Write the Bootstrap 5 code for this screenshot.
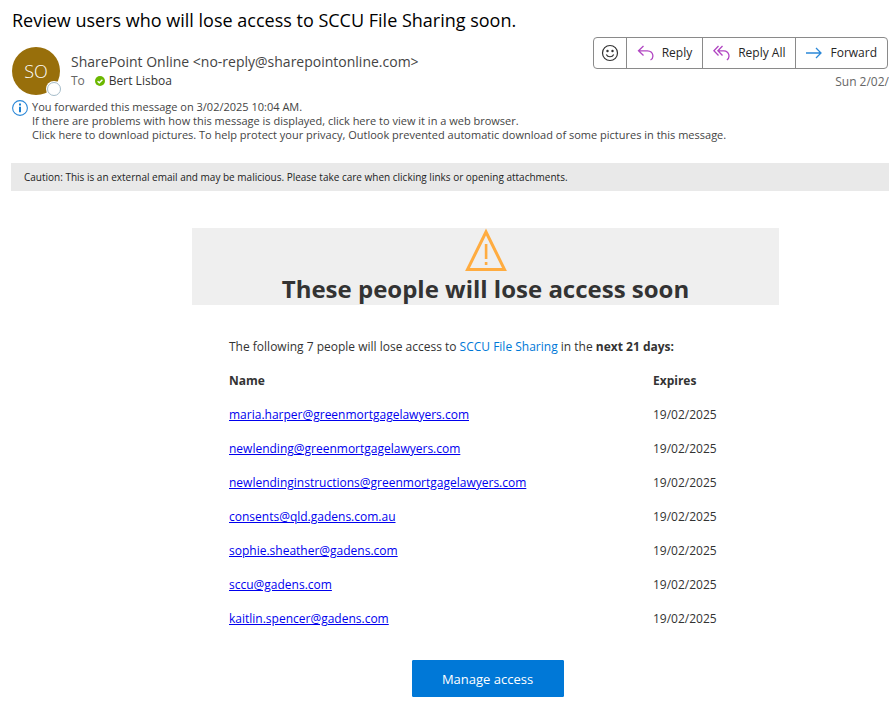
<!DOCTYPE html>
<html lang="en">
<head>
<meta charset="utf-8">
<meta name="viewport" content="width=device-width, initial-scale=1">
<title>Review users who will lose access to SCCU File Sharing soon.</title>
<link href="https://cdn.jsdelivr.net/npm/bootstrap@5.3.0/dist/css/bootstrap.min.css" rel="stylesheet">
<style>
body{font-family:"Open Sans","Noto Sans",sans-serif;font-size:12px;line-height:18px;color:#333;background:#fff;overflow-x:hidden}
.mail-head{padding:8px 0 0 12px}
.subject{font-size:18px;line-height:24px;font-weight:400;color:#000}
.sender{padding:15px 0 5px}
.avatar{width:48px;height:48px;background:#986f0b;color:#fff;font-size:18px;font-weight:300;margin-right:11px}
.presence{position:absolute;right:-1px;bottom:-1px;width:14px;height:14px;border:1px solid #a5bcc9;background:#fff;box-shadow:0 0 0 1px #fff}
.from{font-size:14px;line-height:20px;color:#444}
.sender-text{padding-top:5px}
.soft{color:#666}
.actions-col{padding-top:5px}
.actions{margin-right:1px}
.actions .btn{--bs-btn-border-color:#8a8a8a;--bs-btn-color:#262626;--bs-btn-border-radius:4px;--bs-btn-font-size:12px;--bs-btn-line-height:18px;--bs-btn-padding-y:6px;--bs-btn-padding-x:10px;height:32px}
.actions .react{--bs-btn-padding-x:7px}
.notes{font-size:11px;line-height:14px;color:#444}
.caution{margin:21px 0 0 11px;padding:5px 13px;background:#e9e9e9;color:#222;font-size:10px}
.mail-body{padding:37px 0 20px 82px}
.sheet{max-width:587px}
.banner{background:#efefef;height:77px}
.banner h1{font-size:24px;line-height:34px;font-weight:700;color:#333}
.details{padding:33px 37px 24px}
.site{color:#0078d7}
.people{--bs-table-color:#333;color:#333}
.people>:not(caption)>*>*{padding:8px 0;border:0}
.people a{color:#00e}
.expires{width:89px}
.btn-manage{--bs-btn-color:#fff;--bs-btn-bg:#0078d7;--bs-btn-hover-color:#fff;--bs-btn-hover-bg:#0067b8;--bs-btn-border-color:#0078d7;--bs-btn-border-radius:1px;--bs-btn-font-size:13px;--bs-btn-line-height:18px;width:152px;height:37px}
</style>
<script defer src="https://cdn.jsdelivr.net/npm/bootstrap@5.3.0/dist/js/bootstrap.bundle.min.js"></script>
</head>
<body>
<header class="mail-head">
  <h2 class="subject mb-0">Review users who will lose access to SCCU File Sharing soon.</h2>
  <div class="d-flex justify-content-between">
    <div class="sender d-flex">
      <div class="avatar rounded-circle position-relative d-flex align-items-center justify-content-center flex-shrink-0">SO<span class="presence rounded-circle"></span></div>
      <div class="sender-text">
        <div class="from text-nowrap">SharePoint Online &lt;no-reply@sharepointonline.com&gt;</div>
        <div class="d-flex align-items-center"><span class="soft me-2">To</span>
          <svg class="me-1" width="12" height="10" viewBox="0 0 12 10" aria-hidden="true"><circle cx="7" cy="5" r="5" fill="#6bb700"/><path d="M4.600 5.200 6.300 6.800 9.400 3.700" fill="none" stroke="#fff" stroke-width="1.400"/></svg>
          <span>Bert Lisboa</span></div>
      </div>
    </div>
    <div class="actions-col d-flex flex-column">
      <div class="btn-group actions" role="group" aria-label="Message actions">
        <button type="button" class="btn react d-flex align-items-center" aria-label="React"><svg width="18" height="18" viewBox="0 0 18 18" fill="none" stroke="#333" stroke-width="1.200"><circle cx="9" cy="9" r="7.500"/><path d="M5.300 10.500c1.400 3 6 3 7.400 0"/><circle cx="6.500" cy="7" r=".6" fill="#333"/><circle cx="11.500" cy="7" r=".6" fill="#333"/></svg></button>
        <button type="button" class="btn d-flex align-items-center gap-2"><svg width="17" height="16" viewBox="0 0 17 16" fill="none" stroke="#b146c2" stroke-width="1.300"><path d="M6.500 1 1.500 5.800l5 4.700M1.500 5.800h9c6.500.3 6.500 7.500 3 9.200"/></svg>Reply</button>
        <button type="button" class="btn d-flex align-items-center gap-2"><svg width="17" height="16" viewBox="0 0 17 16" fill="none" stroke="#b146c2" stroke-width="1.300"><path d="M5.500 1 .9 5.800l4.600 4.700M9.500 1 4.900 5.800l4.600 4.700M4.900 5.800h6c5.500.3 6.500 7 3 9.200"/></svg>Reply All</button>
        <button type="button" class="btn d-flex align-items-center gap-2"><svg width="16" height="16" viewBox="0 0 16 16" fill="none" stroke="#2b88d8" stroke-width="1.300"><path d="M0 8h15M10 3l5 5-5 5"/></svg>Forward</button>
      </div>
      <div class="soft text-end text-nowrap pt-1">Sun 2/02/</div>
    </div>
  </div>
  <div class="notes d-flex">
    <svg class="flex-shrink-0 me-1" width="16" height="16" viewBox="0 0 16 16" aria-hidden="true"><circle cx="8" cy="8" r="7.400" fill="#fff" stroke="#2b88d8" stroke-width="1.100"/><path d="M7 3.500h2v2H7zM7 6.700h2v5.500H7z" fill="#1a7fd0"/></svg>
    <div>
      <div>You forwarded this message on 3/02/2025 10:04 AM.</div>
      <div>If there are problems with how this message is displayed, click here to view it in a web browser.</div>
      <div>Click here to download pictures. To help protect your privacy, Outlook prevented automatic download of some pictures in this message.</div>
    </div>
  </div>
</header>
<div class="caution">Caution: This is an external email and may be malicious. Please take care when clicking links or opening attachments.</div>
<main class="mail-body">
  <div class="sheet mx-auto">
    <div class="banner text-center">
      <svg class="d-block mx-auto" width="44" height="44" viewBox="0 0 44 44" aria-hidden="true"><path d="M22 4 3.500 41.500h37z" fill="none" stroke="#ffac40" stroke-width="3"/><path d="M20.800 16h2.600v15h-2.600zM20.800 34h2.600v3h-2.600z" fill="#ffac40"/></svg>
      <h1 class="mb-0 text-nowrap">These people will lose access soon</h1>
    </div>
    <div class="details">
      <p class="mb-2">The following 7 people will lose access to <a href="#" class="site text-decoration-none">SCCU File Sharing</a> in the <strong>next 21 days:</strong></p>
      <table class="table people mb-0">
        <thead><tr><th scope="col">Name</th><th scope="col" class="expires">Expires</th></tr></thead>
        <tbody>
          <tr><td><a href="#">maria.harper@greenmortgagelawyers.com</a></td><td>19/02/2025</td></tr>
          <tr><td><a href="#">newlending@greenmortgagelawyers.com</a></td><td>19/02/2025</td></tr>
          <tr><td><a href="#">newlendinginstructions@greenmortgagelawyers.com</a></td><td>19/02/2025</td></tr>
          <tr><td><a href="#">consents@qld.gadens.com.au</a></td><td>19/02/2025</td></tr>
          <tr><td><a href="#">sophie.sheather@gadens.com</a></td><td>19/02/2025</td></tr>
          <tr><td><a href="#">sccu@gadens.com</a></td><td>19/02/2025</td></tr>
          <tr><td><a href="#">kaitlin.spencer@gadens.com</a></td><td>19/02/2025</td></tr>
        </tbody>
      </table>
    </div>
    <div class="text-center ps-1"><button type="button" class="btn btn-manage">Manage access</button></div>
  </div>
</main>
</body>
</html>
